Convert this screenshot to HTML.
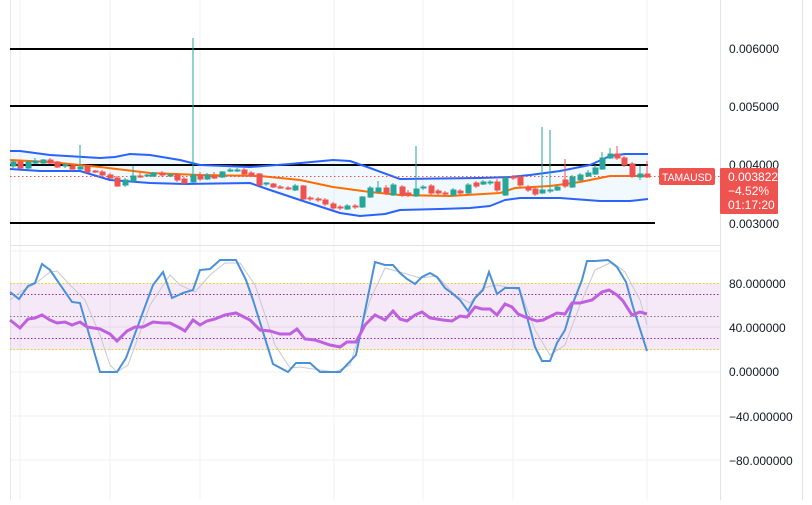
<!DOCTYPE html>
<html><head><style>
body{margin:0;background:#fff;width:812px;height:500px;overflow:hidden;font-family:"Liberation Sans",sans-serif}
</style></head><body>
<svg width="812" height="500" xmlns="http://www.w3.org/2000/svg" font-family="Liberation Sans, sans-serif">
<rect width="812" height="500" fill="#fff"/>
<g stroke="#eef0f3" stroke-width="1">
<line x1="20" y1="0" x2="20" y2="500"/><line x1="110" y1="0" x2="110" y2="500"/><line x1="200" y1="0" x2="200" y2="500"/><line x1="334" y1="0" x2="334" y2="500"/><line x1="423" y1="0" x2="423" y2="500"/><line x1="513" y1="0" x2="513" y2="500"/><line x1="647" y1="0" x2="647" y2="500"/>
<line x1="10" y1="251" x2="720" y2="251"/><line x1="10" y1="327" x2="720" y2="327"/><line x1="10" y1="372" x2="720" y2="372"/><line x1="10" y1="416" x2="720" y2="416"/><line x1="10" y1="460" x2="720" y2="460"/>
</g>
<line x1="10.5" y1="0" x2="10.5" y2="500" stroke="#e6e8ee"/>
<line x1="720.5" y1="0" x2="720.5" y2="500" stroke="#e0e3eb"/>
<line x1="802.5" y1="0" x2="802.5" y2="500" stroke="#e0e3eb"/>
<line x1="10" y1="245.5" x2="720" y2="245.5" stroke="#e0e3eb"/>
<g stroke="#000" stroke-width="2">
<line x1="10" y1="49" x2="648" y2="49"/><line x1="10" y1="106" x2="648" y2="106"/><line x1="10" y1="165" x2="648" y2="165"/><line x1="10" y1="223" x2="655" y2="223"/>
</g>
<path d="M10,151 L20,151 50,155 100,158 115,157 130,154 150,155 180,160 200,165 250,167 290,164 333,160 350,161 370,168 400,179 480,178 510,177 530,175 560,171 590,165 610,156 625,154 648,154 L648,199 630,201 600,201 560,198 520,198 505,200 490,206 470,208 440,209 400,210 385,214 360,216 340,213 300,200 270,190 250,183 185,184 150,183 110,180 80,171 40,171 10,169 Z" fill="#2196f3" fill-opacity="0.06"/>
<polyline fill="none" stroke="#2962ff" stroke-width="2" stroke-linejoin="round" points="10,151 20,151 50,155 100,158 115,157 130,154 150,155 180,160 200,165 250,167 290,164 333,160 350,161 370,168 400,179 480,178 510,177 530,175 560,171 590,165 610,156 625,154 648,154"/>
<polyline fill="none" stroke="#2962ff" stroke-width="2" stroke-linejoin="round" points="10,169 40,171 80,171 110,180 150,183 185,184 250,183 270,190 300,200 340,213 360,216 385,214 400,210 440,209 470,208 490,206 505,200 520,198 560,198 600,201 630,201 648,199"/>
<polyline fill="none" stroke="#ff6d00" stroke-width="2" stroke-linejoin="round" points="10,160 50,162 100,167 150,173 200,175 260,176 300,180 333,187 370,192 400,195 450,196 500,193 515,188 550,186 580,182 610,176 648,176"/>
<line x1="10" y1="176.5" x2="720" y2="176.5" stroke="#ef5350" stroke-dasharray="1.5,2.5"/>
<g fill="#26a69a" stroke="#26a69a">
<line x1="13" y1="160" x2="13" y2="168"/><rect x="11" y="162" width="5" height="4"/>
<line x1="28" y1="160" x2="28" y2="170"/><rect x="26" y="162" width="5" height="6"/>
<line x1="35" y1="158" x2="35" y2="164"/><rect x="33" y="161" width="5" height="2"/>
<line x1="43" y1="159" x2="43" y2="164"/><rect x="41" y="160" width="5" height="3"/>
<line x1="65" y1="163" x2="65" y2="168"/><rect x="63" y="165" width="5" height="1"/>
<line x1="80" y1="145" x2="80" y2="170"/><rect x="78" y="167" width="5" height="2"/>
<line x1="125" y1="178" x2="125" y2="187"/><rect x="123" y="180" width="5" height="5"/>
<line x1="133" y1="166" x2="133" y2="182"/><rect x="131" y="176" width="5" height="5"/>
<line x1="147" y1="174" x2="147" y2="177"/><rect x="145" y="175" width="5" height="1"/>
<line x1="153" y1="172" x2="153" y2="177"/><rect x="151" y="173" width="5" height="3"/>
<line x1="170" y1="173" x2="170" y2="177"/><rect x="168" y="175" width="5" height="1"/>
<line x1="193" y1="38" x2="193" y2="183"/><rect x="191" y="175" width="5" height="7"/>
<line x1="207" y1="173" x2="207" y2="180"/><rect x="205" y="175" width="5" height="4"/>
<line x1="222" y1="171" x2="222" y2="178"/><rect x="220" y="172" width="5" height="5"/>
<line x1="230" y1="168" x2="230" y2="172"/><rect x="228" y="170" width="5" height="1"/>
<line x1="237" y1="168" x2="237" y2="172"/><rect x="235" y="170" width="5" height="1"/>
<line x1="266" y1="182" x2="266" y2="186"/><rect x="264" y="183" width="5" height="1"/>
<line x1="295" y1="184" x2="295" y2="191"/><rect x="293" y="186" width="5" height="4"/>
<line x1="347" y1="204" x2="347" y2="210"/><rect x="345" y="206" width="5" height="3"/>
<line x1="362" y1="196" x2="362" y2="208"/><rect x="360" y="197" width="5" height="10"/>
<line x1="370" y1="186" x2="370" y2="198"/><rect x="368" y="188" width="5" height="9"/>
<line x1="378" y1="181" x2="378" y2="193"/><rect x="376" y="188" width="5" height="4"/>
<line x1="393" y1="183" x2="393" y2="196"/><rect x="391" y="185" width="5" height="10"/>
<line x1="416" y1="146" x2="416" y2="197"/><rect x="414" y="189" width="5" height="7"/>
<line x1="423" y1="185" x2="423" y2="190"/><rect x="421" y="187" width="5" height="1"/>
<line x1="453" y1="188" x2="453" y2="196"/><rect x="451" y="190" width="5" height="5"/>
<line x1="468" y1="183" x2="468" y2="194"/><rect x="466" y="185" width="5" height="8"/>
<line x1="483" y1="180" x2="483" y2="185"/><rect x="481" y="182" width="5" height="2"/>
<line x1="490" y1="180" x2="490" y2="185"/><rect x="488" y="182" width="5" height="1"/>
<line x1="505" y1="176" x2="505" y2="196"/><rect x="503" y="178" width="5" height="17"/>
<line x1="542" y1="127" x2="542" y2="194"/><rect x="540" y="190" width="5" height="3"/>
<line x1="550" y1="130" x2="550" y2="193"/><rect x="548" y="190" width="5" height="1"/>
<line x1="557" y1="185" x2="557" y2="191"/><rect x="555" y="187" width="5" height="3"/>
<line x1="572" y1="175" x2="572" y2="188"/><rect x="570" y="177" width="5" height="10"/>
<line x1="580" y1="173" x2="580" y2="181"/><rect x="578" y="175" width="5" height="5"/>
<line x1="588" y1="170" x2="588" y2="177"/><rect x="586" y="173" width="5" height="3"/>
<line x1="595" y1="165" x2="595" y2="175"/><rect x="593" y="168" width="5" height="6"/>
<line x1="602" y1="152" x2="602" y2="170"/><rect x="600" y="158" width="5" height="11"/>
<line x1="610" y1="148" x2="610" y2="159"/><rect x="608" y="154" width="5" height="4"/>
<line x1="640" y1="166" x2="640" y2="180"/><rect x="638" y="174" width="5" height="3"/>
</g>
<g fill="#ef5350" stroke="#ef5350">
<line x1="20" y1="160" x2="20" y2="169"/><rect x="18" y="162" width="5" height="6"/>
<line x1="50" y1="158" x2="50" y2="164"/><rect x="48" y="160" width="5" height="3"/>
<line x1="57" y1="161" x2="57" y2="168"/><rect x="55" y="162" width="5" height="5"/>
<line x1="72" y1="164" x2="72" y2="171"/><rect x="70" y="166" width="5" height="3"/>
<line x1="87" y1="165" x2="87" y2="173"/><rect x="85" y="166" width="5" height="6"/>
<line x1="95" y1="170" x2="95" y2="173"/><rect x="93" y="171" width="5" height="1"/>
<line x1="102" y1="170" x2="102" y2="176"/><rect x="100" y="172" width="5" height="3"/>
<line x1="110" y1="173" x2="110" y2="179"/><rect x="108" y="175" width="5" height="3"/>
<line x1="117" y1="176" x2="117" y2="187"/><rect x="115" y="178" width="5" height="8"/>
<line x1="140" y1="173" x2="140" y2="178"/><rect x="138" y="176" width="5" height="1"/>
<line x1="162" y1="171" x2="162" y2="177"/><rect x="160" y="173" width="5" height="2"/>
<line x1="177" y1="173" x2="177" y2="182"/><rect x="175" y="175" width="5" height="5"/>
<line x1="184" y1="177" x2="184" y2="185"/><rect x="182" y="179" width="5" height="4"/>
<line x1="200" y1="172" x2="200" y2="181"/><rect x="198" y="175" width="5" height="4"/>
<line x1="214" y1="172" x2="214" y2="179"/><rect x="212" y="176" width="5" height="2"/>
<line x1="244" y1="168" x2="244" y2="175"/><rect x="242" y="170" width="5" height="4"/>
<line x1="251" y1="171" x2="251" y2="177"/><rect x="249" y="173" width="5" height="3"/>
<line x1="259" y1="173" x2="259" y2="186"/><rect x="257" y="174" width="5" height="11"/>
<line x1="273" y1="183" x2="273" y2="188"/><rect x="271" y="184" width="5" height="3"/>
<line x1="280" y1="185" x2="280" y2="189"/><rect x="278" y="187" width="5" height="1"/>
<line x1="288" y1="186" x2="288" y2="190"/><rect x="286" y="188" width="5" height="1"/>
<line x1="303" y1="185" x2="303" y2="200"/><rect x="301" y="186" width="5" height="13"/>
<line x1="310" y1="196" x2="310" y2="201"/><rect x="308" y="198" width="5" height="1"/>
<line x1="318" y1="197" x2="318" y2="202"/><rect x="316" y="199" width="5" height="1"/>
<line x1="325" y1="198" x2="325" y2="206"/><rect x="323" y="200" width="5" height="4"/>
<line x1="333" y1="202" x2="333" y2="210"/><rect x="331" y="204" width="5" height="4"/>
<line x1="340" y1="205" x2="340" y2="210"/><rect x="338" y="207" width="5" height="1"/>
<line x1="355" y1="204" x2="355" y2="209"/><rect x="353" y="206" width="5" height="1"/>
<line x1="386" y1="185" x2="386" y2="195"/><rect x="384" y="188" width="5" height="5"/>
<line x1="402" y1="185" x2="402" y2="197"/><rect x="400" y="187" width="5" height="8"/>
<line x1="408" y1="190" x2="408" y2="197"/><rect x="406" y="193" width="5" height="2"/>
<line x1="431" y1="184" x2="431" y2="195"/><rect x="429" y="186" width="5" height="7"/>
<line x1="438" y1="189" x2="438" y2="195"/><rect x="436" y="191" width="5" height="2"/>
<line x1="445" y1="191" x2="445" y2="196"/><rect x="443" y="193" width="5" height="1"/>
<line x1="460" y1="189" x2="460" y2="195"/><rect x="458" y="191" width="5" height="2"/>
<line x1="476" y1="181" x2="476" y2="188"/><rect x="474" y="183" width="5" height="3"/>
<line x1="497" y1="179" x2="497" y2="192"/><rect x="495" y="182" width="5" height="8"/>
<line x1="513" y1="175" x2="513" y2="180"/><rect x="511" y="177" width="5" height="1"/>
<line x1="520" y1="175" x2="520" y2="187"/><rect x="518" y="177" width="5" height="8"/>
<line x1="528" y1="185" x2="528" y2="192"/><rect x="526" y="187" width="5" height="3"/>
<line x1="535" y1="187" x2="535" y2="196"/><rect x="533" y="189" width="5" height="5"/>
<line x1="565" y1="159" x2="565" y2="188"/><rect x="563" y="180" width="5" height="6"/>
<line x1="617" y1="146" x2="617" y2="160"/><rect x="615" y="154" width="5" height="4"/>
<line x1="624" y1="156" x2="624" y2="167"/><rect x="622" y="158" width="5" height="7"/>
<line x1="632" y1="162" x2="632" y2="178"/><rect x="630" y="164" width="5" height="12"/>
<line x1="647" y1="161" x2="647" y2="178"/><rect x="645" y="174" width="5" height="3"/>
</g>
<g font-size="12" fill="#131722">
<text x="729" y="53">0.006000</text><text x="729" y="111">0.005000</text><text x="729" y="169">0.004000</text><text x="729" y="228">0.003000</text>
<text x="729" y="288">80.000000</text><text x="729" y="332">40.000000</text><text x="729" y="376">0.000000</text><text x="729" y="421">−40.000000</text><text x="729" y="465">−80.000000</text>
</g>
<rect x="659" y="168" width="56" height="17" rx="2" fill="#ef5350"/>
<text x="662" y="181" font-size="11" fill="#fff" textLength="50" lengthAdjust="spacingAndGlyphs">TAMAUSD</text>
<rect x="720" y="168" width="58" height="46" rx="1" fill="#ef5350"/>
<g font-size="12" fill="#fff"><text x="728" y="181">0.003822</text><text x="728" y="195">−4.52%</text><text x="728" y="209">01:17:20</text></g>
<rect x="10" y="283" width="710" height="67" fill="#9c27b0" fill-opacity="0.1"/>
<g stroke-width="1">
<line x1="10" y1="283.5" x2="720" y2="283.5" stroke="#e6d400" stroke-dasharray="1.5,2"/>
<line x1="10" y1="349.5" x2="720" y2="349.5" stroke="#e6d400" stroke-dasharray="1.5,2"/>
<line x1="10" y1="294.5" x2="720" y2="294.5" stroke="#9c27b0" stroke-dasharray="1.5,2"/>
<line x1="10" y1="338.5" x2="720" y2="338.5" stroke="#9c27b0" stroke-dasharray="1.5,2"/>
<line x1="10" y1="316.5" x2="720" y2="316.5" stroke="#787b86" stroke-dasharray="1.5,2"/>
</g>
<polyline fill="none" stroke="#c8c8d0" stroke-width="1" points="10,300 20,292 35,284 50,272 57,271 70,285 85,300 100,335 110,365 117,372 128,365 150,305 170,275 180,285 195,292 210,275 225,263 240,263 255,285 275,345 290,368 300,367 320,370 335,372 350,365 370,300 385,268 400,272 420,278 437,276 455,295 470,303 483,288 497,285 520,290 535,330 550,355 565,345 580,305 595,270 612,262 625,272 640,300 647,325"/>
<polyline fill="none" stroke="#4a90d9" stroke-width="2" points="10,292 19,299 28,286 35,283 42,264 50,270 72,302 80,303 100,372 117,372 126,358 153,285 163,272 172,298 183,293 193,290 200,270 210,269 220,260 236,260 246,280 253,300 273,364 288,372 296,363 310,363 320,372 340,372 356,355 375,262 385,265 393,265 400,273 407,279 415,284 422,277 430,273 437,277 445,288 453,294 460,300 468,311 475,298 483,290 489,272 497,294 505,288 519,288 527,317 535,347 542,361 550,361 557,343 565,330 573,303 582,280 587,261 595,261 608,260 617,267 626,282 633,307 647,351"/>
<polyline fill="none" stroke="#c060e0" stroke-width="3" points="10,320 20,328 28,319 35,318 42,315 50,320 57,323 65,322 72,325 80,322 87,327 100,329 110,334 117,341 127,331 135,327 143,327 153,322 163,323 170,323 180,328 185,331 193,320 200,325 207,321 215,319 225,315 236,313 250,320 260,330 270,331 280,334 290,334 297,329 305,339 315,340 330,345 340,347 347,342 356,342 365,325 375,315 385,320 393,311 400,319 407,321 415,315 422,312 430,318 443,320 452,321 460,316 467,317 475,307 482,309 490,309 497,315 505,304 512,307 518,314 525,317 537,321 543,320 557,313 565,314 572,303 580,303 592,300 602,292 609,290 617,295 623,301 632,315 640,312 647,314"/>
</svg>
</body></html>
